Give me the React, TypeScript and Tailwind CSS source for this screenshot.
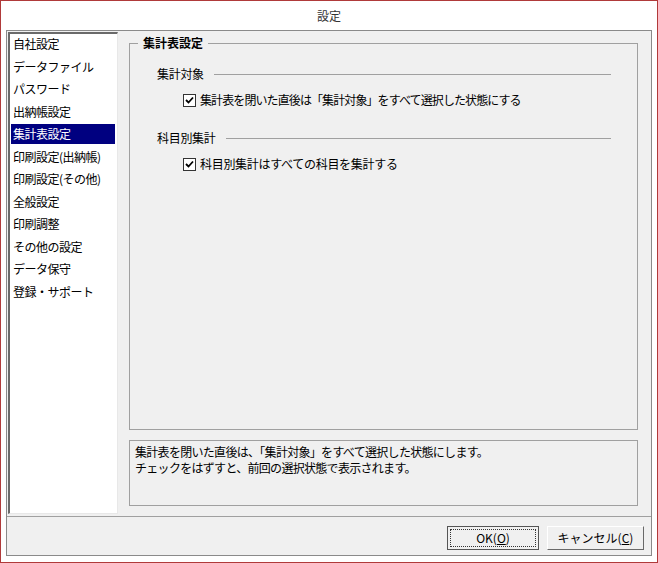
import React from "react";

const menuItems = [
  "自社設定",
  "データファイル",
  "パスワード",
  "出納帳設定",
  "集計表設定",
  "印刷設定(出納帳)",
  "印刷設定(その他)",
  "全般設定",
  "印刷調整",
  "その他の設定",
  "データ保守",
  "登録・サポート",
];

function CheckBox() {
  return (
    <span className="flex h-[13px] w-[13px] shrink-0 items-center justify-center border border-[#333333] bg-white">
      <svg width="9" height="9" viewBox="0 0 9 9">
        <path d="M1 4 L3.5 6.5 L8 1.5" fill="none" stroke="#000" strokeWidth="1.8" />
      </svg>
    </span>
  );
}

function Section({ title, label, tight }: { title: string; label: string; tight?: boolean }) {
  return (
    <div className="flex flex-col">
      <div className="flex h-[16px] items-center pl-[27px] pr-[26px]">
        <span className="whitespace-nowrap tracking-[-0.3px]">{title}</span>
        <span className="ml-[10px] h-px flex-1 bg-[#a0a0a0]" />
      </div>
      <div className="mt-[10px] flex h-[16px] items-center gap-[4px] pl-[53px]">
        <CheckBox />
        <span className={`whitespace-nowrap ${tight ? "tracking-[-0.9px]" : "tracking-[-0.3px]"}`}>
          {label}
        </span>
      </div>
    </div>
  );
}

export default function App() {
  const selected = "集計表設定";

  return (
    <div className="flex h-[563px] w-[658px] flex-col border border-[#b03a3a] bg-white font-['Noto_Sans_CJK_JP',sans-serif] text-[12px] leading-[16px] text-black">
      {/* Title */}
      <div className="flex h-[29px] items-center justify-center pt-[1px] text-[#333333]">設定</div>

      {/* Frame */}
      <div className="ml-[5px] flex h-[526px] w-[646px] flex-col border border-[#8a8a8a] bg-[#f0f0f0]">
        <div className="flex h-[485px] pl-[1px] pt-[1px]">
          {/* Menu list */}
          <div className="h-[482px] w-[110px] border-l-2 border-t-2 border-b border-r border-l-[#6a6a6a] border-t-[#6a6a6a] border-b-[#e8e8e8] border-r-[#e8e8e8] bg-white pl-[1px] pr-[2px]">
            <div className="flex flex-col gap-[2.5px]">
              {menuItems.map((item) => (
                <div
                  key={item}
                  className={`flex h-[20px] items-center whitespace-nowrap pl-[2px] tracking-[-0.5px] ${
                    item === selected ? "bg-[#000080] text-white" : ""
                  }`}
                >
                  {item}
                </div>
              ))}
            </div>
          </div>

          {/* Right column */}
          <div className="ml-[11px] flex w-[509px] flex-col pt-[3px]">
            <fieldset className="m-0 h-[395px] border border-[#a0a0a0] px-0 pb-0 pt-[15px]">
              <legend className="ml-[8px] px-[5px] font-bold">集計表設定</legend>
              <div className="flex flex-col gap-[22px]">
                <Section
                  title="集計対象"
                  label="集計表を閉いた直後は「集計対象」をすべて選択した状態にする"
                  tight
                />
                <Section title="科目別集計" label="科目別集計はすべての科目を集計する" />
              </div>
            </fieldset>

            <div className="mt-[10px] h-[66px] border border-[#a0a0a0] px-[5px] pt-[3px] tracking-[-0.7px]">
              <p>集計表を閉いた直後は、「集計対象」をすべて選択した状態にします。</p>
              <p>チェックをはずすと、前回の選択状態で表示されます。</p>
            </div>
          </div>
        </div>

        {/* Buttons */}
        <div className="flex flex-1 items-start justify-end gap-[8px] border-t border-[#a0a0a0] pr-[7px] pt-[9px]">
          <button className="flex h-[24px] w-[92px] items-center justify-center border border-[#555555] bg-[#f0f0f0] p-[2px]">
            <span className="flex h-full w-full items-center justify-center border border-dotted border-[#333333]">
              OK(<span className="underline">O</span>)
            </span>
          </button>
          <button className="flex h-[24px] w-[97px] items-center justify-center border border-t-white border-l-white border-b-[#696969] border-r-[#696969] bg-[#f0f0f0]">
            キャンセル(<span className="underline">C</span>)
          </button>
        </div>
      </div>
    </div>
  );
}
